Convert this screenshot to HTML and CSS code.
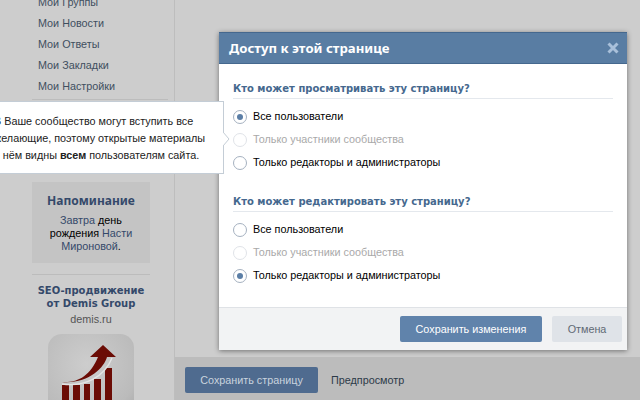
FILE: index.html
```html
<!DOCTYPE html>
<html lang="ru">
<head>
<meta charset="utf-8">
<title>Доступ к этой странице</title>
<link rel="stylesheet" href="styles.css">
</head>
<body>
<div class="page">
  <aside class="sidebar">
    <ul class="menu">
      <li>Мои Группы</li>
      <li>Мои Новости</li>
      <li>Мои Ответы</li>
      <li>Мои Закладки</li>
      <li>Мои Настройки</li>
    </ul>
    <div class="rule rule-menu"></div>
    <section class="reminder">
      <h3>Напоминание</h3>
      <p><span class="link">Завтра</span> день рождения <span class="link">Насти Мироновой</span>.</p>
    </section>
    <div class="rule rule-ad"></div>
    <section class="ad">
      <h4>SEO-продвижение<br>от Demis Group</h4>
      <div class="ad-domain">demis.ru</div>
      <div class="ad-icon">
        <svg width="86" height="67" viewBox="0 0 86 67">
          <path d="M14 51H21V67H14ZM25 51H32V67H25ZM36 50H42V67H36ZM46 45H53V67H46ZM57 34H64V67H57Z" fill="#6b0c05"/>
          <path d="M14 48C30 49 42 42 50 23H42L55 11 68 23H59C56 34 40 50 14 48Z" fill="#6b0c05"/>
          <path d="M14 50C36 53 56 44 64 24" fill="none" stroke="#e4e4e4" stroke-width="1.4"/>
        </svg>
      </div>
    </section>
  </aside>
  <main class="main">
    <div class="content"></div>
    <footer class="page-bar">
      <span class="btn btn-page">Сохранить страницу</span>
      <span class="preview">Предпросмотр</span>
    </footer>
  </main>
</div>

<div class="tooltip">
  В Ваше сообщество могут вступить все<br>
  желающие, поэтому открытые материалы<br>
  в нём видны <b>всем</b> пользователям сайта.
  <svg class="tooltip-tail" width="7" height="14" viewBox="0 0 7 14"><path d="M0 0 6 7 0 14" fill="#fff" stroke="#c4cdd6"/></svg>
</div>

<div class="modal">
  <header class="modal-head">
    <span>Доступ к этой странице</span>
    <svg class="close" width="12" height="12" viewBox="0 0 12 12"><path d="M1.5 1.5 10.5 10.5M10.5 1.5 1.5 10.5" stroke="#a9c0da" stroke-width="3"/></svg>
  </header>
  <div class="modal-body">
    <section class="group">
      <h2>Кто может просматривать эту страницу?</h2>
      <div class="opt"><i class="radio on"></i>Все пользователи</div>
      <div class="opt off"><i class="radio"></i>Только участники сообщества</div>
      <div class="opt"><i class="radio"></i>Только редакторы и администраторы</div>
    </section>
    <section class="group">
      <h2>Кто может редактировать эту страницу?</h2>
      <div class="opt"><i class="radio"></i>Все пользователи</div>
      <div class="opt off"><i class="radio"></i>Только участники сообщества</div>
      <div class="opt"><i class="radio on"></i>Только редакторы и администраторы</div>
    </section>
  </div>
  <footer class="modal-foot">
    <span class="btn btn-save">Сохранить изменения</span>
    <span class="btn btn-cancel">Отмена</span>
  </footer>
</div>
</body>
</html>
```
FILE: styles.css
```css
* { box-sizing: border-box; }
html, body { margin: 0; height: 100%; overflow: hidden; }
body {
  background: #cdcdcd;
  font: 10.8px/13px "Liberation Sans", sans-serif;
  color: #000;
}
.page { display: flex; height: 400px; }
.sidebar {
  width: 175px;
  flex: none;
  padding-left: 32px;
  border-right: 1px solid #bdbdbd;
  overflow: hidden;
}
.menu {
  list-style: none;
  margin: -8px 0 0;
  padding: 0 0 0 6px;
  color: #3f4f5f;
}
.menu li { height: 21px; line-height: 21px; }
.rule { height: 1px; background: #bcbcbc; }
.rule-menu { width: 136px; margin-top: 2px; }
.reminder {
  width: 118px;
  height: 81px;
  margin-top: 82px;
  padding-top: 12px;
  background: #c4c4c4;
  text-align: center;
}
.reminder h3 { margin: 0 0 6px; font: 700 12px/14px "Noto Sans", sans-serif; color: #34496a; }
.reminder p { margin: 0; padding: 0 12px; }
.link { color: #34496a; }
.rule-ad { width: 118px; margin-top: 11px; }
.ad { width: 118px; text-align: center; padding-top: 9px; }
.ad h4 { margin: 0; font: 700 10px/13px "DejaVu Sans", sans-serif; color: #34496a; }
.ad-domain { margin-top: 3px; color: #555; }
.ad-icon {
  width: 86px;
  height: 86px;
  margin: 8px 0 0 16px;
  border-radius: 14px;
  background: radial-gradient(circle at 45% 35%, #cdcdcd, #bbb 70%, #a6a6a6);
}
.ad-icon svg { display: block; }
.main { flex: 1; display: flex; flex-direction: column; }
.content { flex: 1; }
.page-bar {
  height: 43px;
  background: #bcbcbc;
  padding: 10px 0 0 10px;
  display: flex;
  gap: 13px;
  align-items: flex-start;
}
.btn {
  display: flex;
  align-items: center;
  justify-content: center;
  height: 26px;
  border-radius: 2px;
}
.btn-page { width: 133px; background: #4f6b8f; color: #c9d3de; }
.preview { line-height: 26px; color: #2c3a48; }
.tooltip {
  position: absolute;
  left: -30px;
  top: 101px;
  width: 254px;
  height: 73px;
  padding: 11px 0 0 23px;
  background: #fff;
  border: 1px solid #c4cdd6;
  line-height: 17px;
  color: #222;
  z-index: 2;
}
.tooltip-tail { position: absolute; right: -7px; top: 30px; }
.modal {
  position: absolute;
  left: 219px;
  top: 32px;
  width: 408px;
  height: 318px;
  background: #fff;
  display: flex;
  flex-direction: column;
  box-shadow: 0 1px 5px rgba(0,0,0,.45);
}
.modal-head {
  height: 32px;
  flex: none;
  display: flex;
  align-items: center;
  justify-content: space-between;
  padding: 0 8px 0 10px;
  background: #597da3;
  border: 1px solid #45688e;
  border-width: 1px 0 1px 0;
  color: #fff;
  font: 700 13.2px/16px "Noto Sans", sans-serif;
}
.modal-body { flex: 1; padding: 15px 14px 0; }
.group + .group { margin-top: 18px; }
.group h2 {
  margin: 0 0 6px;
  padding-top: 2px;
  height: 20px;
  font: 700 10px/16px "DejaVu Sans", sans-serif;
  color: #45688e;
  border-bottom: 1px solid #e4e8ed;
}
.opt { display: flex; align-items: center; gap: 6px; height: 23px; color: #000; }
.opt.off { color: #a9a9a9; }
.radio {
  width: 14px;
  height: 14px;
  flex: none;
  border: 1px solid #a5b1c0;
  border-radius: 50%;
  background: #fff;
  display: flex;
  align-items: center;
  justify-content: center;
}
.opt.off .radio { border-color: #e0e3e8; }
.radio.on::after { content: ""; width: 6px; height: 6px; border-radius: 50%; background: #5b7ea6; }
.modal-foot {
  height: 43px;
  flex: none;
  background: #f2f3f4;
  border-top: 1px solid #dfe2e6;
  padding-top: 8px;
  display: flex;
  gap: 10px;
  justify-content: flex-end;
  padding-right: 5px;
}
.btn-save { width: 142px; background: #6083ab; color: #fff; }
.btn-cancel { width: 70px; background: #dfe3e8; color: #5f6a75; }
```
